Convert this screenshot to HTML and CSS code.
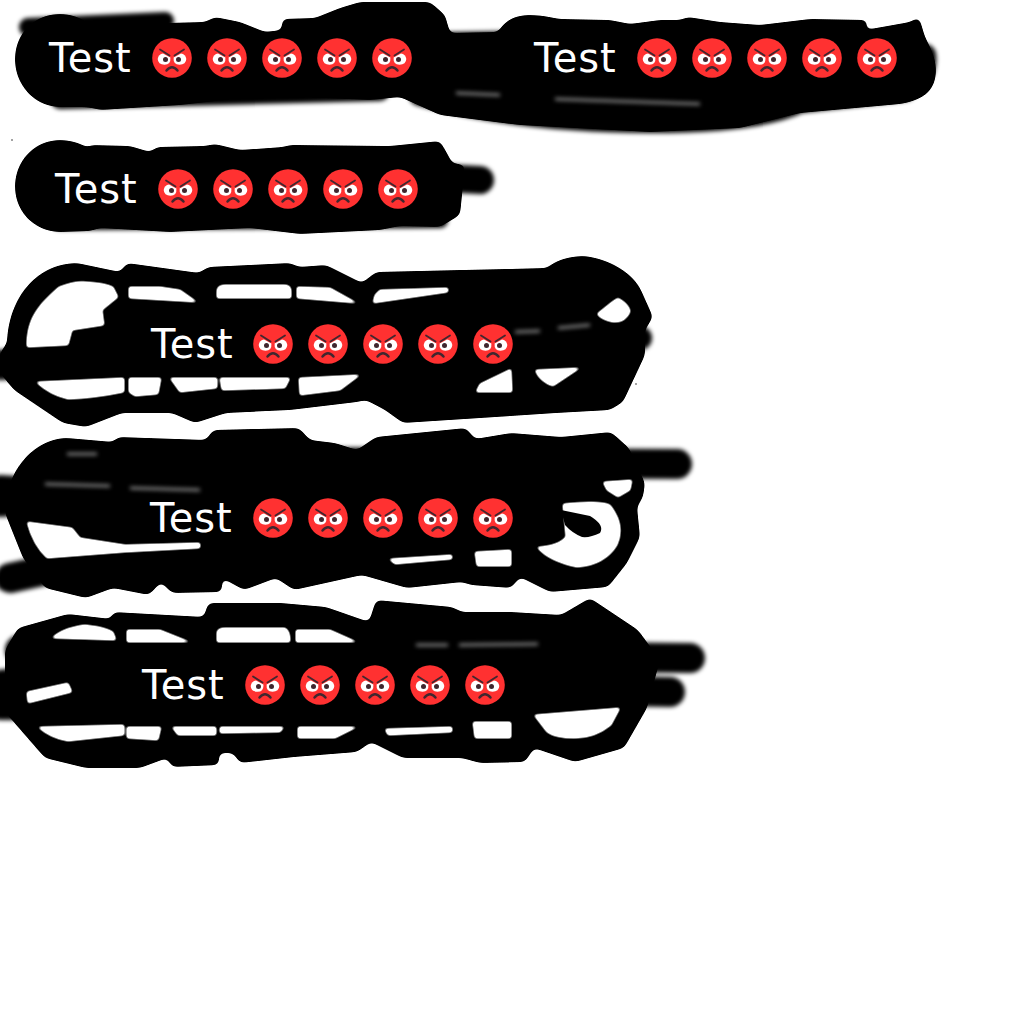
FILE: index.html
```html
<!DOCTYPE html>
<html lang="en">
<head>
<meta charset="utf-8">
<title>Test</title>
<link rel="stylesheet" href="styles.css">
</head>
<body>
<main class="canvas">
<svg class="scribble" viewBox="0 0 1024 1024" width="1024" height="1024" aria-hidden="true">
  <defs>
    <filter id="soft" filterUnits="userSpaceOnUse" x="0" y="0" width="1024" height="1024"><feGaussianBlur stdDeviation="2.2"/></filter>
    <filter id="round" filterUnits="userSpaceOnUse" x="0" y="0" width="1024" height="1024">
      <feGaussianBlur stdDeviation="3"/>
      <feComponentTransfer><feFuncA type="linear" slope="10" intercept="-4.5"/></feComponentTransfer>
    </filter>
    <filter id="hole" filterUnits="userSpaceOnUse" x="0" y="0" width="1024" height="1024">
      <feGaussianBlur stdDeviation="1.6"/>
      <feComponentTransfer><feFuncA type="linear" slope="2.6" intercept="-0.4"/></feComponentTransfer>
    </filter>
    <symbol id="angry" viewBox="0 0 40 40">
      <circle cx="20" cy="20" r="19.800" fill="#ff3131"/>
      <path d="M5.700 21 Q6.500 16 11 15.500 L18.400 19.500 Q19 26.700 12.500 26.700 Q6 26.700 5.700 21Z" fill="#fff"/>
      <path d="M34.300 21 Q33.500 16 29 15.500 L21.600 19.500 Q21 26.700 27.500 26.700 Q34 26.700 34.300 21Z" fill="#fff"/>
      <circle cx="13.500" cy="21.600" r="2.500" fill="#40272f"/>
      <circle cx="26.500" cy="21.600" r="2.500" fill="#40272f"/>
      <path d="M8 11.500 L17.500 17.500M32 11.500 L22.500 17.500" stroke="#40272f" stroke-width="1.800" fill="none" stroke-linecap="round"/>
      <path d="M14.500 32.500 Q20 26 25.500 32.500" stroke="#40272f" stroke-width="2.500" fill="none" stroke-linecap="round"/>
    </symbol>
  </defs>

  <g class="ink" filter="url(#soft)">
    <path d="M28 27 L165 21M400 42 L520 40M60 100 L380 92" class="band b18"/>
    <path d="M420 95 Q520 122 650 122 Q760 122 800 102 L905 90 Q928 75 925 55" class="band b22"/>
    <path d="M440 178 L480 180" class="band b28"/>
    <path d="M60 222 L440 220" class="band b16"/>
    <path d="M115 312 L620 300M80 342 L640 338M0 368 L500 352" class="band b24"/>
    <path d="M400 405 L600 392" class="band b14"/>
    <path d="M0 490 L230 505M230 462 L677 464M90 525 L555 530M10 578 L130 552" class="band b30"/>
    <path d="M20 650 L360 650M380 655 L690 658M90 682 L670 692M0 705 L400 705M0 685 L40 680" class="band b30"/>
    <path d="M0 362 L80 350M0 505 L60 500" class="band b24"/>
  </g>

  <g class="ink" filter="url(#round)">
    <path d="M15 60 C15 32 35 14 60 14 C75 14 85 20 90 25 L205 22 L215 17 L240 22 L265 32 L282 30 L282 19 L315 18 L340 8 L360 2 L430 2 L445 15 L450 33 L498 32 C505 20 515 15 529 15 C545 15 552 18 560 19 L610 20 L630 24 L660 20 L680 20 L688 17 L720 22 L760 25 L810 19 L868 20 L865 30 L910 22 L919 17 L925 37 C932 50 936 60 936 70 C936 90 925 100 900 104 L800 113 L740 128 L650 132 L520 125 L440 115 L400 97 L370 100 L300 97 L250 97 L225 100 L180 105 L100 110 C90 106 75 107 60 107 C35 107 15 85 15 60Z"/>
    <path d="M15 187 C15 160 35 140 60 140 C72 140 82 144 88 148 L90 145 L130 146 L150 152 L157 147 L205 146 L215 144 L240 150 L283 147 L290 145 L390 146 L440 141 L448 155 L452 163 L465 165 L460 215 L440 227 L400 226 L380 230 L300 234 L250 228 L170 232 L100 228 L90 231 L60 232 C35 232 15 212 15 187Z"/>
    <path d="M7 343 C8 300 35 263 77 263 L120 272 L127 263 L199 273 L208 267 L290 263 L299 267 L326 265 L362 283 L376 272 L462 270 L547 268 C555 260 570 256 584 256 C605 258 630 270 640 288 L653 317 L645 330 L645 355 L623 402 L610 410 L556 413 L403 423 L385 410 L366 400 L357 402 L290 410 L226 413 L195 423 L172 413 L122 413 L86 427 L63 423 L14 390 L0 373 L0 353Z"/>
    <path d="M5 513 C5 470 35 438 67 438 L113 442 L118 437 L206 440 L213 430 L299 428 L310 440 L335 443 L357 450 L376 437 L466 428 L475 439 L511 433 L561 437 L611 432 L629 448 L645 483 L643 497 L637 507 L640 537 L627 563 L608 587 L550 592 L520 577 L511 588 L471 585 L462 582 L407 588 L362 575 L294 590 L276 578 L244 590 L222 578 L222 592 L172 593 L161 582 L149 595 L113 588 L86 598 L45 588 L23 558Z"/>
    <path d="M18 628 L68 614 L111 619 L113 612 L204 617 L208 603 L281 603 L326 607 L369 622 L376 600 L452 607 L462 612 L511 612 L561 615 L590 598 L638 630 L660 660 L647 708 L624 748 L575 762 L534 748 L525 762 L480 763 L462 758 L403 758 L371 742 L357 752 L294 757 L240 763 L233 753 L219 753 L219 765 L172 767 L167 758 L140 768 L86 768 L45 758 L5 712 L5 650Z"/>
  </g>

  <g class="paper" filter="url(#hole)">
    <path d="M27 347 C27 320 36 307 59 287 Q75 281 86 282 Q105 283 113 287 L118 297 L102 310 L104 325 L72 330 L68 345Z"/>
    <path d="M36 382 L124 378 L124 392 Q95 398 68 399 Q50 395 36 382Z"/>
    <path d="M129 287 L160 287 L180 290 L197 302 L129 298Z"/>
    <path d="M217 291 Q217 285 225 285 L285 285 Q291 285 291 291 L291 298 L217 298Z"/>
    <path d="M297 287 L330 288 L357 303 L297 298Z"/>
    <path d="M373 303 L375 295 L380 290 L448 288 L448 292Z"/>
    <path d="M129 378 L161 378 L158 394 L135 396 L129 392Z"/>
    <path d="M170 378 L217 378 L217 388 L180 392Z"/>
    <path d="M220 378 L290 378 L285 388 L222 390Z"/>
    <path d="M299 378 L360 375 L340 390 L300 395Z"/>
    <path d="M476 392 L480 384 L511 369 L512 392Z"/>
    <path d="M535 370 L580 368 L553 386 Q540 382 535 370Z"/>
    <path d="M612 302 L618 298 Q630 305 630 312 Q625 323 613 322 Q602 320 597 314Z"/>
    <path d="M27 522 L72 528 L80 538 L125 545 L200 543 L200 548 L125 552 L47 558 Q33 545 27 522Z"/>
    <path d="M389 559 L452 555 L452 559 L395 564Z"/>
    <path d="M475 552 L511 550 L511 566 L477 566Z"/>
    <path d="M537 547 Q548 561 577 567 Q605 565 617 545 Q626 525 610 505 Q600 500 563 504 L566 537 Q558 546 537 547Z"/>
    <path d="M603 482 L632 480 L630 490 L618 497 L607 490Z"/>
    <path d="M52 638 Q62 628 85 625 Q105 627 113 632 L116 640Z"/>
    <path d="M27 692 L68 683 L72 692 L28 703Z"/>
    <path d="M38 727 L124 725 L124 735 L68 741 Q50 738 38 727Z"/>
    <path d="M127 727 L161 727 L158 740 L127 738Z"/>
    <path d="M172 727 L216 727 L216 735 L178 735Z"/>
    <path d="M220 727 L284 727 L280 732 L220 733Z"/>
    <path d="M298 727 L357 727 L335 738 L298 738Z"/>
    <path d="M385 729 L452 727 L452 732 L388 735Z"/>
    <path d="M473 722 L511 722 L511 738 L475 738Z"/>
    <path d="M534 715 L620 708 L611 725 Q595 738 575 738 Q555 738 547 732Z"/>
    <path d="M127 630 L160 630 L190 642 L127 642Z"/>
    <path d="M217 632 Q218 628 225 628 L285 628 Q290 630 290 642 L217 642Z"/>
    <path d="M296 630 L330 630 L357 642 L296 642Z"/>
  </g>

  <g class="ink">
    <path d="M561 510 L590 516 Q605 525 600 533 Q590 538 582 537 Q572 533 565 525Z"/>
    <circle cx="12" cy="140" r="0.700"/>
    <circle cx="636" cy="384" r="0.700"/>
  </g>
  <g class="slits" filter="url(#soft)">
    <path d="M456 93 L500 95M555 99 L700 104"/>
    <path d="M416 645 L448 645M459 645 L538 644"/>
    <path d="M45 484 L110 486M130 488 L200 490M67 454 L97 454"/>
    <path d="M515 332 L540 331M558 328 L590 325"/>
  </g>
</svg>

<div class="line l1"><span class="label">Test</span><span class="faces"><svg class="face"><use href="#angry"/></svg><svg class="face"><use href="#angry"/></svg><svg class="face"><use href="#angry"/></svg><svg class="face"><use href="#angry"/></svg><svg class="face"><use href="#angry"/></svg></span></div>
<div class="line l2"><span class="label">Test</span><span class="faces"><svg class="face"><use href="#angry"/></svg><svg class="face"><use href="#angry"/></svg><svg class="face"><use href="#angry"/></svg><svg class="face"><use href="#angry"/></svg><svg class="face"><use href="#angry"/></svg></span></div>
<div class="line l3"><span class="label">Test</span><span class="faces"><svg class="face"><use href="#angry"/></svg><svg class="face"><use href="#angry"/></svg><svg class="face"><use href="#angry"/></svg><svg class="face"><use href="#angry"/></svg><svg class="face"><use href="#angry"/></svg></span></div>
<div class="line l4"><span class="label">Test</span><span class="faces"><svg class="face"><use href="#angry"/></svg><svg class="face"><use href="#angry"/></svg><svg class="face"><use href="#angry"/></svg><svg class="face"><use href="#angry"/></svg><svg class="face"><use href="#angry"/></svg></span></div>
<div class="line l5"><span class="label">Test</span><span class="faces"><svg class="face"><use href="#angry"/></svg><svg class="face"><use href="#angry"/></svg><svg class="face"><use href="#angry"/></svg><svg class="face"><use href="#angry"/></svg><svg class="face"><use href="#angry"/></svg></span></div>
<div class="line l6"><span class="label">Test</span><span class="faces"><svg class="face"><use href="#angry"/></svg><svg class="face"><use href="#angry"/></svg><svg class="face"><use href="#angry"/></svg><svg class="face"><use href="#angry"/></svg><svg class="face"><use href="#angry"/></svg></span></div>
</main>
</body>
</html>
```
FILE: styles.css
```css
html, body { margin: 0; padding: 0; background: #fff; }
.canvas { position: relative; width: 1024px; height: 1024px; overflow: hidden; }
.scribble { position: absolute; left: 0; top: 0; display: block; }
.ink { fill: #000; }
.paper { fill: #fff; }
.slits { fill: none; stroke: #fff; stroke-width: 2.5; opacity: .6; }
.band { fill: none; stroke: #000; stroke-linecap: round; stroke-linejoin: round; }
.b14 { stroke-width: 14; }
.b16 { stroke-width: 16; }
.b18 { stroke-width: 18; }
.b22 { stroke-width: 22; }
.b24 { stroke-width: 24; }
.b28 { stroke-width: 28; }
.b30 { stroke-width: 30; }
.line { position: absolute; display: flex; align-items: center; gap: 20px; height: 40px; }
.l1 { left: 49px; top: 38px; }
.l2 { left: 534px; top: 38px; }
.l3 { left: 55px; top: 169px; }
.l4 { left: 151px; top: 324px; }
.l5 { left: 150px; top: 498px; }
.l6 { left: 142px; top: 665px; }
.label { font-family: "DejaVu Sans", sans-serif; font-size: 40px; line-height: 40px; letter-spacing: 1px; color: #fff; }
.faces { display: flex; gap: 15px; }
.l4 .faces { margin-left: -1px; }
.face { width: 40px; height: 40px; display: block; }
```
